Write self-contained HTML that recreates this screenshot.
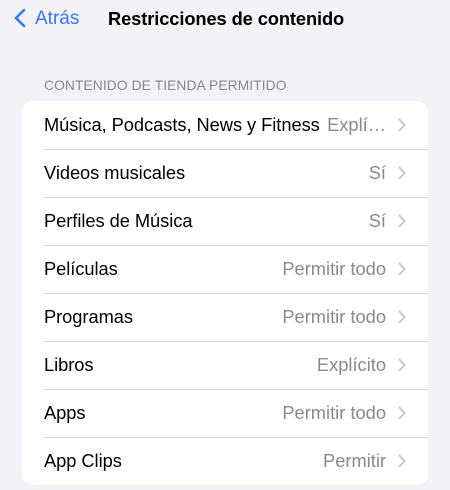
<!DOCTYPE html><html><head><style>
body{margin:0;width:450px;height:490px;background:#f2f2f7;font-family:"Liberation Sans",sans-serif;position:relative;overflow:hidden}
.nav{position:absolute;top:7px;left:0;right:0;height:24px}
.back{position:absolute;left:14px;top:0;color:#3478f6;font-size:19px;line-height:24px}
.back svg{vertical-align:-4px;margin-right:9px}
.title{position:absolute;left:108px;top:0;font-size:18.3px;font-weight:bold;line-height:24px;color:#000;letter-spacing:-0.1px}
.hdr{position:absolute;left:44px;top:78px;font-size:13.8px;color:#87878c;letter-spacing:0.1px}
.card{position:absolute;left:22px;top:101px;width:406px;height:384px;background:#fff;border-radius:11px;overflow:hidden}
.row{height:48px;position:relative;font-size:18.3px;line-height:48px;color:#000}
.row .l{position:absolute;left:22px;letter-spacing:-0.05px}
.row .r{position:absolute;right:42px;color:#8a8a8e}
.row svg{position:absolute;right:22px;top:17px}
.row+.row:before{content:"";position:absolute;left:22px;right:0;top:0;border-top:1px solid #d8d8dc}
</style></head><body>
<div class="nav"><div class="back"><svg width="12" height="20" viewBox="0 0 12 20"><path d="M10 2L2 10l8 8" fill="none" stroke="#3478f6" stroke-width="2.6" stroke-linecap="round" stroke-linejoin="round"/></svg>Atrás</div>
<div class="title">Restricciones de contenido</div></div>
<div class="hdr">CONTENIDO DE TIENDA PERMITIDO</div>
<div class="card">
<div class="row"><span class="l">Música, Podcasts, News y Fitness</span><span class="r">Explí…</span><svg width="8" height="14" viewBox="0 0 8 14"><path d="M1.5 1.5l5 5.5-5 5.5" fill="none" stroke="#c4c4c7" stroke-width="1.8" stroke-linecap="round" stroke-linejoin="round"/></svg></div>
<div class="row"><span class="l">Videos musicales</span><span class="r">Sí</span><svg width="8" height="14" viewBox="0 0 8 14"><path d="M1.5 1.5l5 5.5-5 5.5" fill="none" stroke="#c4c4c7" stroke-width="1.8" stroke-linecap="round" stroke-linejoin="round"/></svg></div>
<div class="row"><span class="l">Perfiles de Música</span><span class="r">Sí</span><svg width="8" height="14" viewBox="0 0 8 14"><path d="M1.5 1.5l5 5.5-5 5.5" fill="none" stroke="#c4c4c7" stroke-width="1.8" stroke-linecap="round" stroke-linejoin="round"/></svg></div>
<div class="row"><span class="l">Películas</span><span class="r">Permitir todo</span><svg width="8" height="14" viewBox="0 0 8 14"><path d="M1.5 1.5l5 5.5-5 5.5" fill="none" stroke="#c4c4c7" stroke-width="1.8" stroke-linecap="round" stroke-linejoin="round"/></svg></div>
<div class="row"><span class="l">Programas</span><span class="r">Permitir todo</span><svg width="8" height="14" viewBox="0 0 8 14"><path d="M1.5 1.5l5 5.5-5 5.5" fill="none" stroke="#c4c4c7" stroke-width="1.8" stroke-linecap="round" stroke-linejoin="round"/></svg></div>
<div class="row"><span class="l">Libros</span><span class="r">Explícito</span><svg width="8" height="14" viewBox="0 0 8 14"><path d="M1.5 1.5l5 5.5-5 5.5" fill="none" stroke="#c4c4c7" stroke-width="1.8" stroke-linecap="round" stroke-linejoin="round"/></svg></div>
<div class="row"><span class="l">Apps</span><span class="r">Permitir todo</span><svg width="8" height="14" viewBox="0 0 8 14"><path d="M1.5 1.5l5 5.5-5 5.5" fill="none" stroke="#c4c4c7" stroke-width="1.8" stroke-linecap="round" stroke-linejoin="round"/></svg></div>
<div class="row"><span class="l">App Clips</span><span class="r">Permitir</span><svg width="8" height="14" viewBox="0 0 8 14"><path d="M1.5 1.5l5 5.5-5 5.5" fill="none" stroke="#c4c4c7" stroke-width="1.8" stroke-linecap="round" stroke-linejoin="round"/></svg></div>
</div>
</body></html>
